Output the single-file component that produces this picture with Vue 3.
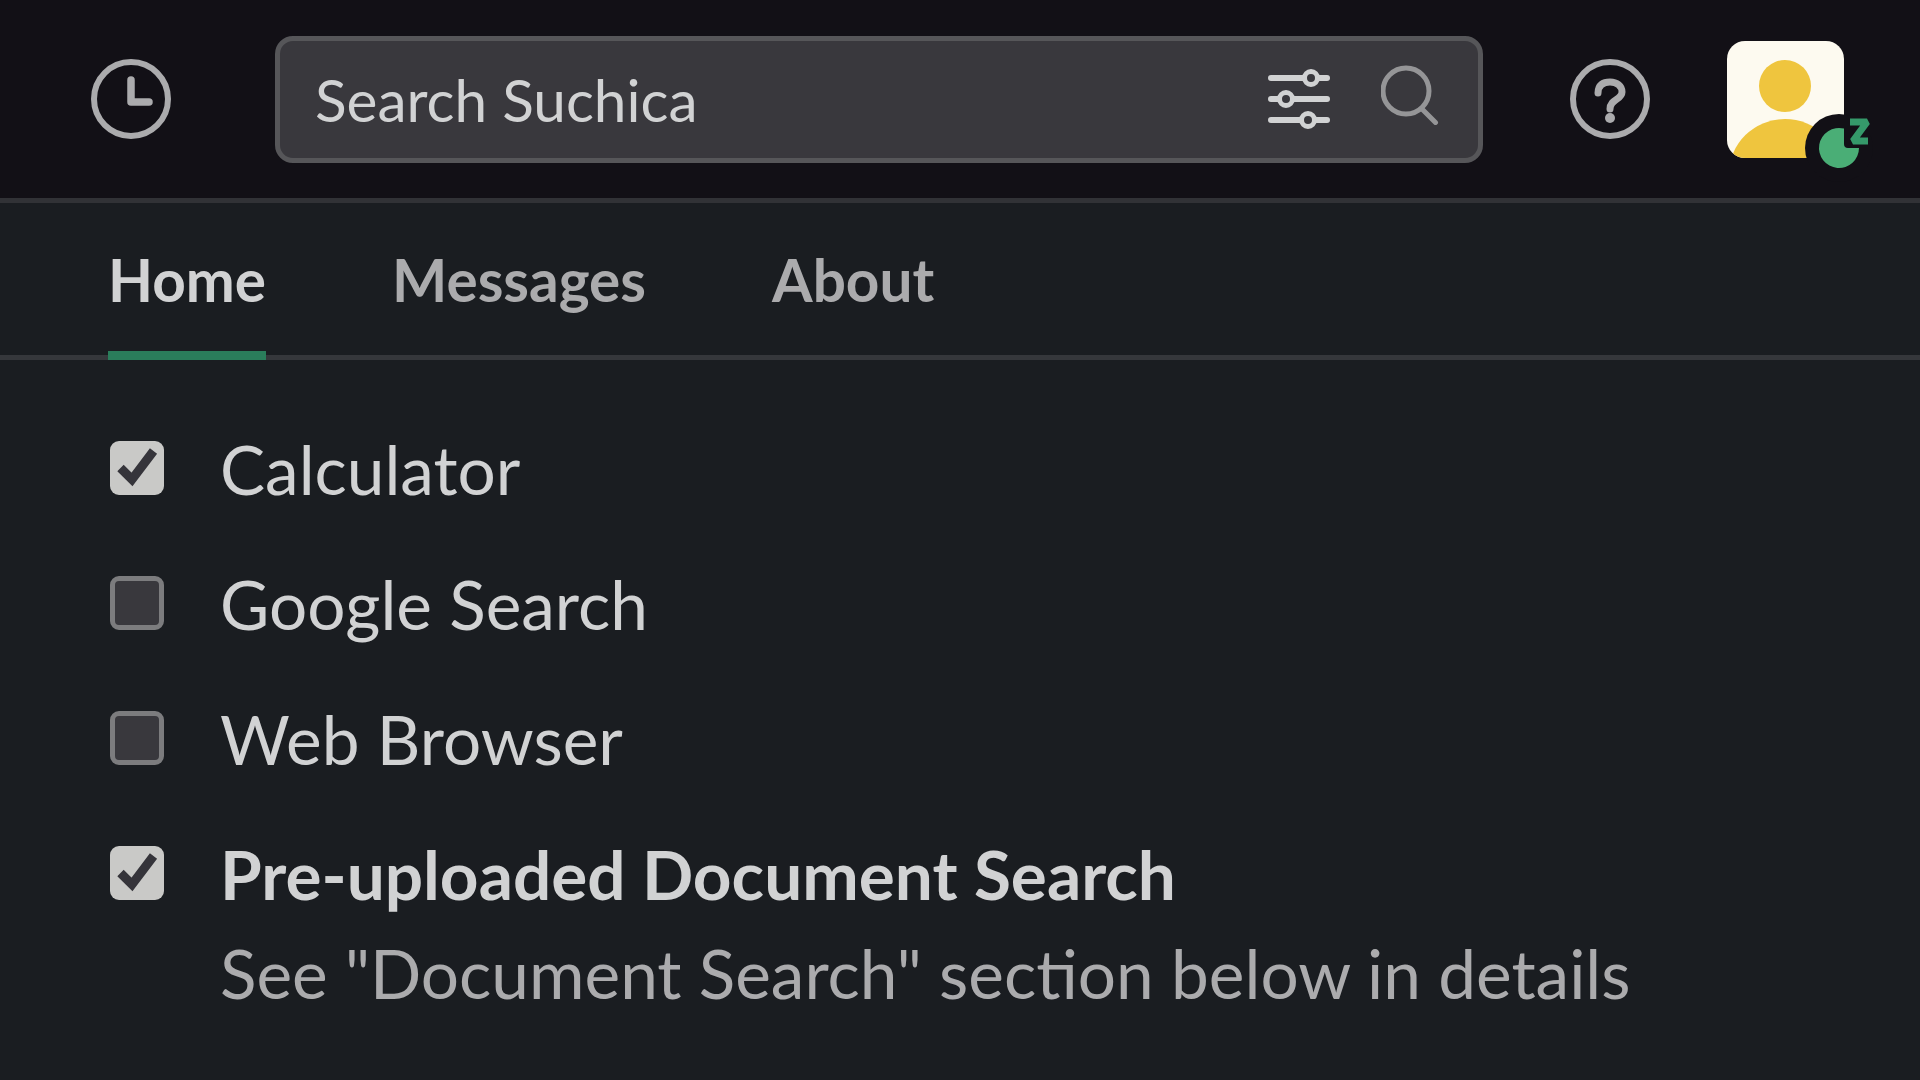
<template>
  <div class="page">
    <!-- Top bar -->
    <header class="topbar">
      <svg class="round-icon" viewBox="0 0 80 80" fill="none" stroke="#ababad">
        <circle cx="40" cy="40" r="37" stroke-width="6" />
        <path d="M40 21V43H58" stroke-width="7.5" stroke-linecap="round" stroke-linejoin="round" />
      </svg>

      <div class="search">
        <span class="search-text">Search Suchica</span>
        <svg class="filter-icon" viewBox="0 0 62 60" fill="none">
          <g stroke="#d1d2d3" stroke-width="6" stroke-linecap="round">
            <path d="M3 9H59M3 30H59M3 51H59" />
          </g>
          <g fill="#39383d" stroke="#d1d2d3" stroke-width="5">
            <circle cx="43" cy="9" r="6.5" />
            <circle cx="18" cy="30" r="6.5" />
            <circle cx="40" cy="51" r="6.5" />
          </g>
        </svg>
        <svg class="search-icon" viewBox="0 0 58 60" fill="none" stroke="#959597">
          <circle cx="25" cy="26" r="23" stroke-width="5" />
          <path d="M41 44L54.5 57.5" stroke-width="5" stroke-linecap="round" />
        </svg>
      </div>

      <svg class="round-icon help" viewBox="0 0 80 80" fill="none" stroke="#ababad">
        <circle cx="40" cy="40" r="37" stroke-width="6" />
        <path d="M28 34C28 26 33 23 40 23C47 23 52 27 52 33C52 41 40 40 40 50" stroke-width="7" stroke-linecap="round" />
        <circle cx="40" cy="59" r="5" fill="#ababad" stroke="none" />
      </svg>

      <div class="avatar">
        <svg class="avatar-img" viewBox="0 0 117 117">
          <rect width="117" height="117" fill="#fdfaf0" />
          <circle cx="58" cy="45" r="26" fill="#efc53e" />
          <ellipse cx="58" cy="133" rx="56" ry="55" fill="#efc53e" />
        </svg>
        <svg class="status" viewBox="0 0 72 72">
          <circle cx="34" cy="38" r="34" fill="#121016" />
          <path d="M39 18.6V34A4 4 0 0 0 43 38H54A20 20 0 1 1 39 18.6Z" fill="#4aae76" />
          <path d="M45 12H62L48 31H63" fill="none" stroke="#35996a" stroke-width="7" stroke-miterlimit="2" />
        </svg>
      </div>
    </header>

    <!-- Tabs -->
    <nav class="tabs">
      <div
        v-for="tab in tabs"
        :key="tab"
        class="tab"
        :class="{ active: tab === activeTab }"
      >
        {{ tab }}
      </div>
    </nav>

    <!-- Options -->
    <div class="options">
      <div v-for="item in items" :key="item.label" class="option">
        <span class="checkbox" :class="{ checked: item.checked }">
          <svg v-if="item.checked" viewBox="0 0 54 54">
            <path d="M10.5 27L22 38.5L43.5 10" fill="none" stroke="#35343a" stroke-width="9" />
          </svg>
        </span>
        <div class="option-text">
          <div class="option-label" :class="{ strong: item.hint }">{{ item.label }}</div>
          <div v-if="item.hint" class="option-hint">{{ item.hint }}</div>
        </div>
      </div>
    </div>
  </div>
</template>

<script setup>
const tabs = ["Home", "Messages", "About"]
const activeTab = "Home"

const items = [
  { label: "Calculator", checked: true },
  { label: "Google Search", checked: false },
  { label: "Web Browser", checked: false },
  {
    label: "Pre-uploaded Document Search",
    checked: true,
    hint: 'See "Document Search" section below in details'
  }
]
</script>

<style scoped>
.page {
  width: 1920px;
  height: 1080px;
  overflow: hidden;
  background: #1a1d21;
  font-family: Lato, "Liberation Sans", sans-serif;
}

.topbar {
  display: flex;
  align-items: center;
  box-sizing: border-box;
  height: 203px;
  padding-left: 91px;
  background: #121016;
  border-bottom: 5px solid #313236;
}

.round-icon {
  flex: none;
  width: 80px;
  height: 80px;
}

.search {
  display: flex;
  align-items: center;
  box-sizing: border-box;
  width: 1208px;
  height: 127px;
  margin-left: 104px;
  padding-left: 35px;
  background: #39383d;
  border: 5px solid #565659;
  border-radius: 18px;
}

.search-text {
  flex: 1;
  font-size: 58.5px;
  color: #d1d2d3;
}

.filter-icon {
  flex: none;
  width: 62px;
  height: 60px;
}

.search-icon {
  flex: none;
  width: 58px;
  height: 60px;
  margin-left: 51px;
  margin-right: 39px;
  margin-top: -9px;
}

.help {
  margin-left: 87px;
}

.avatar {
  position: relative;
  flex: none;
  width: 117px;
  height: 117px;
  margin-left: 77px;
  margin-top: 1px;
}

.avatar-img {
  display: block;
  width: 117px;
  height: 117px;
  border-radius: 18px;
}

.status {
  position: absolute;
  left: 78px;
  top: 69px;
  width: 72px;
  height: 72px;
}

.tabs {
  display: flex;
  gap: 126px;
  height: 157px;
  box-sizing: border-box;
  padding-left: 108px;
  border-bottom: 5px solid #35373b;
}

.tab {
  box-sizing: border-box;
  height: 157px;
  padding-top: 40px;
  font-size: 58.5px;
  line-height: 72px;
  font-weight: 700;
  color: #ababad;
  border-bottom: 9px solid transparent;
}

.tab.active {
  color: #d1d2d3;
  border-bottom-color: #2a7d5b;
}

.options {
  display: flex;
  flex-direction: column;
  gap: 54px;
  padding: 68px 0 0 110px;
}

.option {
  display: flex;
  gap: 56px;
}

.checkbox {
  flex: none;
  box-sizing: border-box;
  width: 54px;
  height: 54px;
  margin-top: 13px;
  background: #39383d;
  border: 5px solid #7c7c7e;
  border-radius: 9px;
}

.checkbox.checked {
  background: #c9c9c7;
  border: none;
}

.checkbox svg {
  display: block;
  width: 54px;
  height: 54px;
}

.option-label {
  font-size: 67.5px;
  line-height: 81px;
  color: #d1d2d3;
}

.option-label.strong {
  font-weight: 700;
}

.option-hint {
  margin-top: 18px;
  font-size: 67.5px;
  line-height: 81px;
  color: #ababad;
}
</style>
